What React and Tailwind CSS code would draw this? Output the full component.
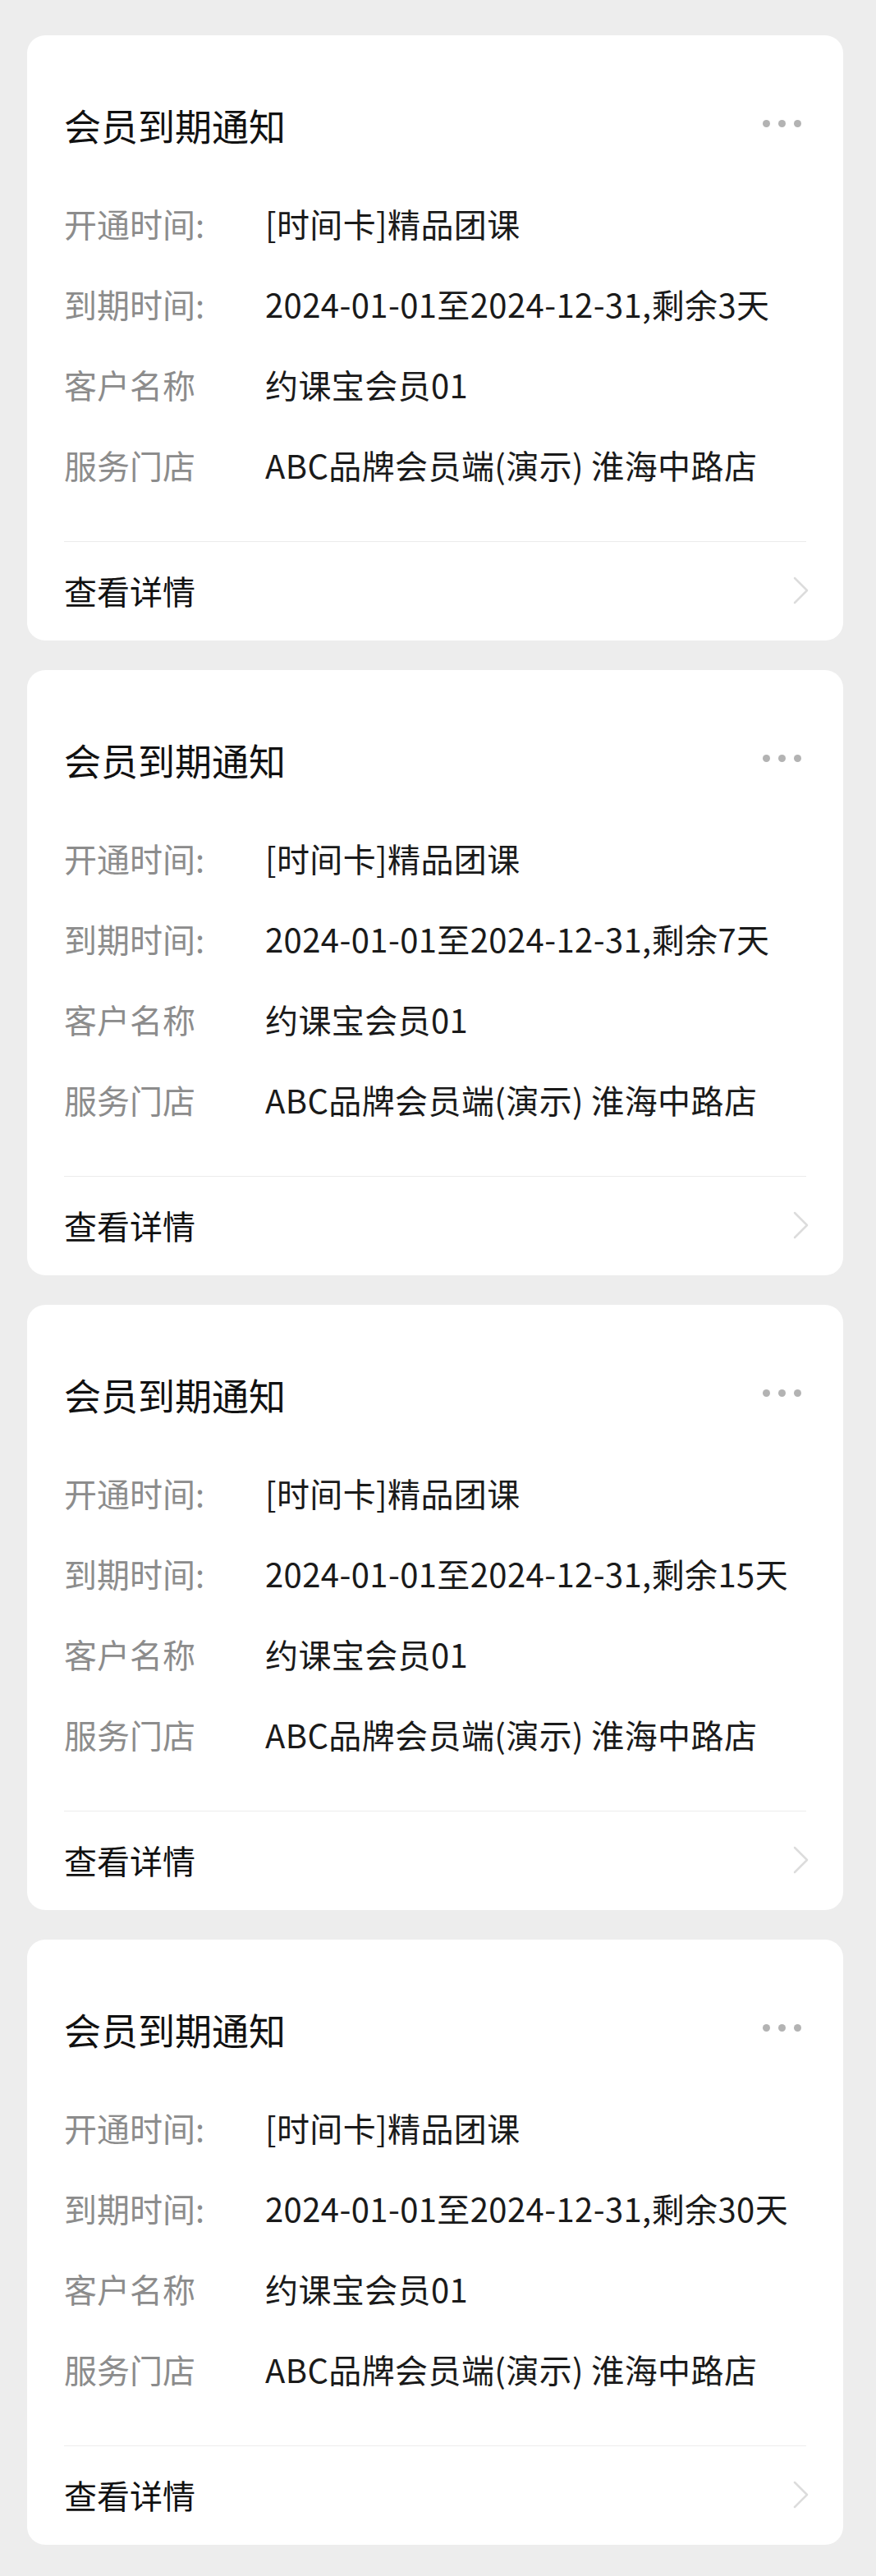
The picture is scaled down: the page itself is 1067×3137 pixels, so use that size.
const cards = ["3", "7", "15", "30"];

function Row({ label, value }) {
  return (
    <div className="flex h-[98px] items-center text-[40px] leading-none">
      <div className="w-[245px] shrink-0 text-[#8c8c8c]">{label}</div>
      <div className="whitespace-nowrap tracking-[0.4px] text-[#1a1a1a]">{value}</div>
    </div>
  );
}

function Card({ days }) {
  return (
    <div className="ml-[33px] w-[994px] rounded-[22px] bg-white px-[45px] pt-[79px]">
      <div className="flex h-[60px] items-center justify-between">
        <div className="text-[45px] leading-none text-[#111]">会员到期通知</div>
        <div className="mr-[6px] flex items-center gap-[10px] pb-[4px]">
          <span className="block h-[9px] w-[9px] rounded-full bg-[#b3b3b3]" />
          <span className="block h-[9px] w-[9px] rounded-full bg-[#b3b3b3]" />
          <span className="block h-[9px] w-[9px] rounded-full bg-[#b3b3b3]" />
        </div>
      </div>
      <div className="mt-[41px]">
        <Row label="开通时间:" value="[时间卡]精品团课" />
        <Row label="到期时间:" value={`2024-01-01至2024-12-31,剩余${days}天`} />
        <Row label="客户名称" value="约课宝会员01" />
        <Row label="服务门店" value="ABC品牌会员端(演示) 淮海中路店" />
      </div>
      <div className="mt-[44px] h-px bg-[#ececec]" />
      <div className="flex h-[120px] items-center justify-between pb-[2px]">
        <div className="text-[40px] leading-none text-[#111]">查看详情</div>
        <svg width="22" height="34" viewBox="0 0 22 34" className="-mr-[5px]">
          <path d="M3 2 L18 17 L3 32" fill="none" stroke="#dcdcdc" strokeWidth="2.5" strokeLinecap="round" strokeLinejoin="round" />
        </svg>
      </div>
    </div>
  );
}

export default function App() {
  return (
    <div
      className="min-h-[3137px] w-[1067px] bg-[#ededed] pt-[43px]"
      style={{ fontFamily: '"Noto Sans CJK SC", "Noto Sans", sans-serif' }}
    >
      <div className="flex flex-col gap-[36px]">
        {cards.map((d) => (
          <Card key={d} days={d} />
        ))}
      </div>
    </div>
  );
}
